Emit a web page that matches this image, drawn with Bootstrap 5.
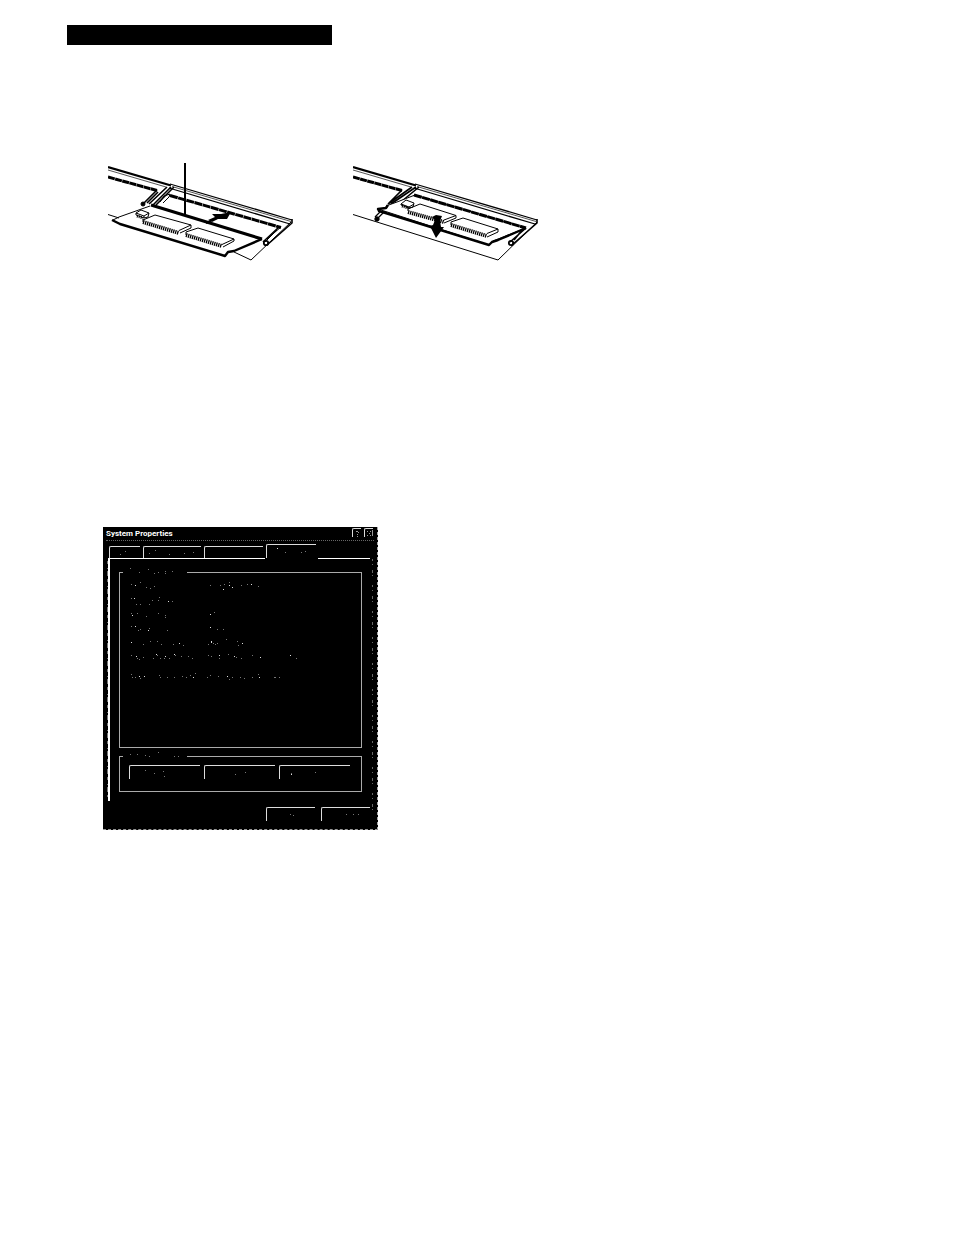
<!DOCTYPE html>
<html lang="en">
<head>
<meta charset="utf-8">
<meta name="viewport" content="width=device-width, initial-scale=1">
<title>System Properties</title>
<link href="https://cdn.jsdelivr.net/npm/bootstrap@5.3.0/dist/css/bootstrap.min.css" rel="stylesheet">
<style>
  body { background: #fff; color: #000; font-family: "Liberation Sans", Arial, sans-serif; }
  .manual-page { padding: 25px 64px 0 67px; }
  .heading-bar { width: 265px; max-width: 100%; height: 20px; background: #000; }
  .figures { margin: 118px 0 0 41px; gap: 60px; }
  .figures svg { width: 185px; height: 98px; }
  .sysprops { width: 275px; max-width: 100%; margin: 266px 0 0 36px; background: #000; color: #fff; border-right: 1px dashed #aaa; border-bottom: 1px dashed #999; padding-bottom: 8px; }
  .caption-bar { height: 13px; padding: 0 4px 0 3px; }
  .caption-text { font: 700 8px/13px Roboto, "Liberation Sans", sans-serif; }
  .edge-btn { appearance: none; background: transparent; padding: 0; border: 0 solid #ddd; border-width: 1px 0 0 1px; border-radius: 2px 0 0 0; display: block; color: #fff; }
  .caption-btns { gap: 3px; padding-top: 1px; }
  .caption-btn { width: 9px; height: 9px; }
  .caption-btn svg { display: block; width: 8px; height: 8px; }
  .scan-rule { border-top: 1px dotted #666; margin: 0 3px; }
  .tab-row { margin: 3px 7px 0 6px; height: 14px; gap: 3px; }
  .tab-row .edge-btn { height: 12px; }
  .tab-row .edge-btn.active { height: 14px; }
  .tab-a { width: 31px; } .tab-b { width: 58px; } .tab-c { width: 59px; } .tab-d { width: 50px; }
  .pane { margin: 0 7px 0 5px; border-left: 2px solid #fff; height: 242px; padding: 13px 8px 0 9px; }
  .pane-top { height: 1px; margin: 0 7px 0 5px; }
  .pane-top span { background: #fff; }
  .pane-top span:first-child { width: 60%; }
  .pane-top span:last-child { width: 20%; }
  .group-box { border: 1px solid #aaa; position: relative; }
  .group-box::before { content: ""; position: absolute; left: 3px; top: -1px; width: 64px; height: 1px; background: #000; }
  .info { height: 176px; }
  .support { height: 36px; margin-top: 8px; padding: 8px 11px 0 9px; gap: 4px; }
  .wide-btn { height: 14px; }
  .foot { gap: 6px; margin: 6px 7px 0 0; }
  .foot .edge-btn { width: 49px; height: 14px; }
  .specks { left: 0; top: 0; width: 275px; height: 302px; pointer-events: none; }
</style>
</head>
<body>
<main class="manual-page">
  <div class="heading-bar"></div>

  <div class="figures d-flex flex-wrap">
    <svg viewBox="108 163 185 98" fill="none" stroke="#000" stroke-width="1" stroke-linejoin="round">
      <path d="M108 170L166 187M172 186.500L291 221.500" stroke="#555"/>
      <path d="M170 184L292 220M169 188L290 224" stroke-width="1.300"/>
      <path d="M108 167L171 185.500" stroke-width="2.200"/>
      <path d="M108 177L157 190.500" stroke-width="3" stroke-dasharray="7 .4"/>
      <path d="M157 190L143 204M167 187L149 204M171 187L153 205M174 187L156 205M158 192L147 203" stroke-width="1.600"/>
      <path d="M160 202L164 196L170 194L169 197L163 203"/>
      <path d="M170 195.500L281 227.500" stroke-width="3" stroke-dasharray="8 .5"/>
      <path d="M151 205L262 239" stroke-width="3.200"/>
      <path d="M185 163V215" stroke-width="2"/>
      <path d="M150 206L119 217L113 220"/>
      <path d="M112 220L120 224L225 256L228 252L234 251L262 239" stroke-width="2.400"/>
      <path d="M108 214.500L119 218M234 252L251 260L291 222M281 227L267 239M277 230L265 242"/>
      <path d="M279 227L263 242M292 219V223L267 245" stroke-width="1.600"/>
      <circle cx="143" cy="204" r="2" fill="#000"/><circle cx="266" cy="243" r="2.200" stroke-width="1.800"/>
      <path d="M136 213l5-3 8 3-1 4-4 1-8-3zM136 213l8 3 5-3M144 216v2"/>
      <path d="M137 216l6 2" stroke-width="3" stroke-dasharray="1 1"/>
      <path d="M143 220L155 215L191 225L179 230.500M191 225V228L180 233M143 219V222"/>
      <path d="M143 222L179 233" stroke-width="4" stroke-dasharray="1.300 .8"/>
      <path d="M186 232L198 228L234 239L222 244.500M234 239V241L223 247M186 232V235"/>
      <path d="M186 235L222 246" stroke-width="4" stroke-dasharray="1.300 .8"/>
      <path d="M208 220L215 217L212 214L221 214L231 212L227 219L218 219L212 222Z" fill="#000" stroke="none"/>
      <path d="M206 223l5-2" stroke-width="2"/>
    </svg>
    <svg viewBox="353 163 185 98" fill="none" stroke="#000" stroke-width="1" stroke-linejoin="round">
      <path d="M353 170L411 187M417 186.500L536 221.500" stroke="#555"/>
      <path d="M415 184L537 220M414 188L535 224" stroke-width="1.300"/>
      <path d="M353 167L416 185.500" stroke-width="2.200"/>
      <path d="M353 177L402 190.500" stroke-width="3" stroke-dasharray="7 .4"/>
      <path d="M402 190L388 204M412 187L388 204M419 187L396 206M416 187L391 204" stroke-width="1.600"/>
      <path d="M385 211L378 218M381 211L375 217" stroke-width="1.300"/>
      <path d="M415 195L397 202L386 206L387 208L378 209L489 245L493 241L526 228Z" fill="#fff"/>
      <path d="M414 195L526 228" stroke-width="3" stroke-dasharray="8 .5"/>
      <path d="M388 205L386 208L378 209L379 211L489 245L492 242L498 240L526 228" stroke-width="2.400"/>
      <path d="M353 214.500L498 260L537 222"/>
      <path d="M537 219V223L512 245M526 228L510 242M523 229L514 240" stroke-width="1.600"/>
      <circle cx="377" cy="219" r="2.200" fill="#000"/><circle cx="511" cy="243" r="2.200" stroke-width="1.800"/>
      <path d="M401 204l5-4 8 3-1 4-4 1-8-3zM401 204l8 3 5-3M409 207v2"/>
      <path d="M402 206l6 2" stroke-width="3" stroke-dasharray="1 1"/>
      <path d="M408 209L420 204L456 215.500L444 220M456 215.500V218L444 223M408 208V211"/>
      <path d="M408 212L444 222" stroke-width="4" stroke-dasharray="1.300 .8"/>
      <path d="M451 222L463 218L498 229L487 233.500M498 229V232L487 237M451 222V225"/>
      <path d="M451 225L487 236" stroke-width="4" stroke-dasharray="1.300 .8"/>
      <path d="M432 217L436 215L442 216L440 221L441 227L444 227L436 238L430 226L433 225L435 220Z" fill="#000" stroke="none"/>
    </svg>
  </div>

  <section class="sysprops position-relative">
    <header class="caption-bar d-flex justify-content-between">
      <span class="caption-text">System Properties</span>
      <span class="caption-btns d-flex">
        <button type="button" class="edge-btn caption-btn" aria-label="Help"><svg viewBox="0 0 8 8" fill="none" stroke="#999"><path d="M3 2.500h2M5.500 3v1M4 5.500h1M4 7.500h1"/></svg></button>
        <button type="button" class="edge-btn caption-btn" aria-label="Close"><svg viewBox="0 0 8 8" fill="none" stroke="#999"><path d="M2 2.500h1M5 2.500h1M4 4.500h1M2 6.500h1M5 6.500h1M7.500 1v6"/></svg></button>
      </span>
    </header>
    <div class="scan-rule"></div>
    <nav class="tab-row d-flex align-items-end">
      <button type="button" class="edge-btn tab-a"></button>
      <button type="button" class="edge-btn tab-b"></button>
      <button type="button" class="edge-btn tab-c"></button>
      <button type="button" class="edge-btn active tab-d"></button>
    </nav>
    <div class="pane-top d-flex justify-content-between"><span></span><span></span></div>
    <div class="pane">
      <div class="group-box info"></div>
      <div class="group-box support d-flex">
        <button type="button" class="edge-btn wide-btn flex-fill"></button>
        <button type="button" class="edge-btn wide-btn flex-fill"></button>
        <button type="button" class="edge-btn wide-btn flex-fill"></button>
      </div>
    </div>
    <footer class="foot d-flex justify-content-end">
      <button type="button" class="edge-btn"></button>
      <button type="button" class="edge-btn"></button>
    </footer>
    <!-- Faint remains of the dialog's labels -->
    <svg class="specks position-absolute" viewBox="0 0 275 302" fill="none" stroke="#777" aria-hidden="true">
      <g transform="translate(0 .5)">
      <path d="M27 41h1M36 45h1M45 42h1M51 46h1M55 45h1M62 44h1M62 46h1M69 44h1M28 57h1M37 55h1M43 60h1M47 61h1M51 59h1M28 71h1M49 73h1M55 73h1M56 70h1M69 74h1M33 77h1M37 77h1M46 77h1M28 86h1M34 86h1M43 89h1M55 86h1M62 88h1M62 90h1M28 99h1M35 103h1M37 102h1M46 101h1M64 103h1"/>
      <path d="M40 117h1M47 114h1M54 114h1M58 117h1M70 117h1M80 118h1M105 117h1M112 117h1M28 128h1M34 131h1M40 130h1M36 132h1M50 131h1M54 128h1M57 131h1M61 131h1M66 131h1M72 128h1M78 129h1M85 129h1M89 131h1M28 147h1M29 150h1M32 150h1M37 151h1M56 148h1M57 150h1M64 150h1M71 150h1M79 149h1M83 150h1M87 148h1M92 146h1"/>
      <path d="M107 58h1M117 58h1M121 57h1M126 55h1M138 58h1M144 57h1M155 59h1M111 85h1M114 102h1M120 102h1M110 116h1M114 116h1M123 112h1M134 114h1M135 118h1M105 128h1M108 129h1M116 131h1M125 127h1M133 130h1M138 131h1M149 128h1M157 130h1M193 131h1M104 150h1M107 148h1M115 149h1M126 152h1M129 150h1M137 150h1M141 151h1M149 150h1M155 147h1M171 150h2M176 150h1"/>
      <path d="M17 27h1M22 24h1M46 26h1M52 23h1M66 27h1M81 26h1M90 25h1M182 25h1M198 25h1M202 24h1M27 227h1M34 227h1M42 228h1M46 229h1M55 225h1M71 229h1M75 229h1M42 243h1M51 246h1M60 244h1M61 249h1M132 247h1M142 245h1M188 246h1M212 245h1M187 287h1M190 288h1M243 287h1M250 287h1M255 287h1"/>
      <path stroke="#ddd" d="M32 58h1M31 71h1M65 74h1M29 88h1M32 99h1M45 103h1M28 115h1M76 116h1M108 115h1M33 129h1M53 127h1M62 129h1M71 127h1M36 149h1M41 149h1M90 150h1M120 62h1M126 58h1M129 60h1M148 57h1M107 87h1M107 100h1M108 114h1M139 116h1M116 128h1M131 129h1M157 130h1M187 128h1M124 149h1M156 150h1M174 21h1M188 247h1"/>
      </g>
      <path stroke="#666" stroke-dasharray="2 3 1 5 3 2 1 9" d="M269.500 32V290"/>
      <path stroke="#777" stroke-dasharray="3 4 1 2 5 3" d="M4.500 34V270"/>
    </svg>
  </section>
</main>
<script src="https://cdn.jsdelivr.net/npm/bootstrap@5.3.0/dist/js/bootstrap.bundle.min.js"></script>
</body>
</html>
